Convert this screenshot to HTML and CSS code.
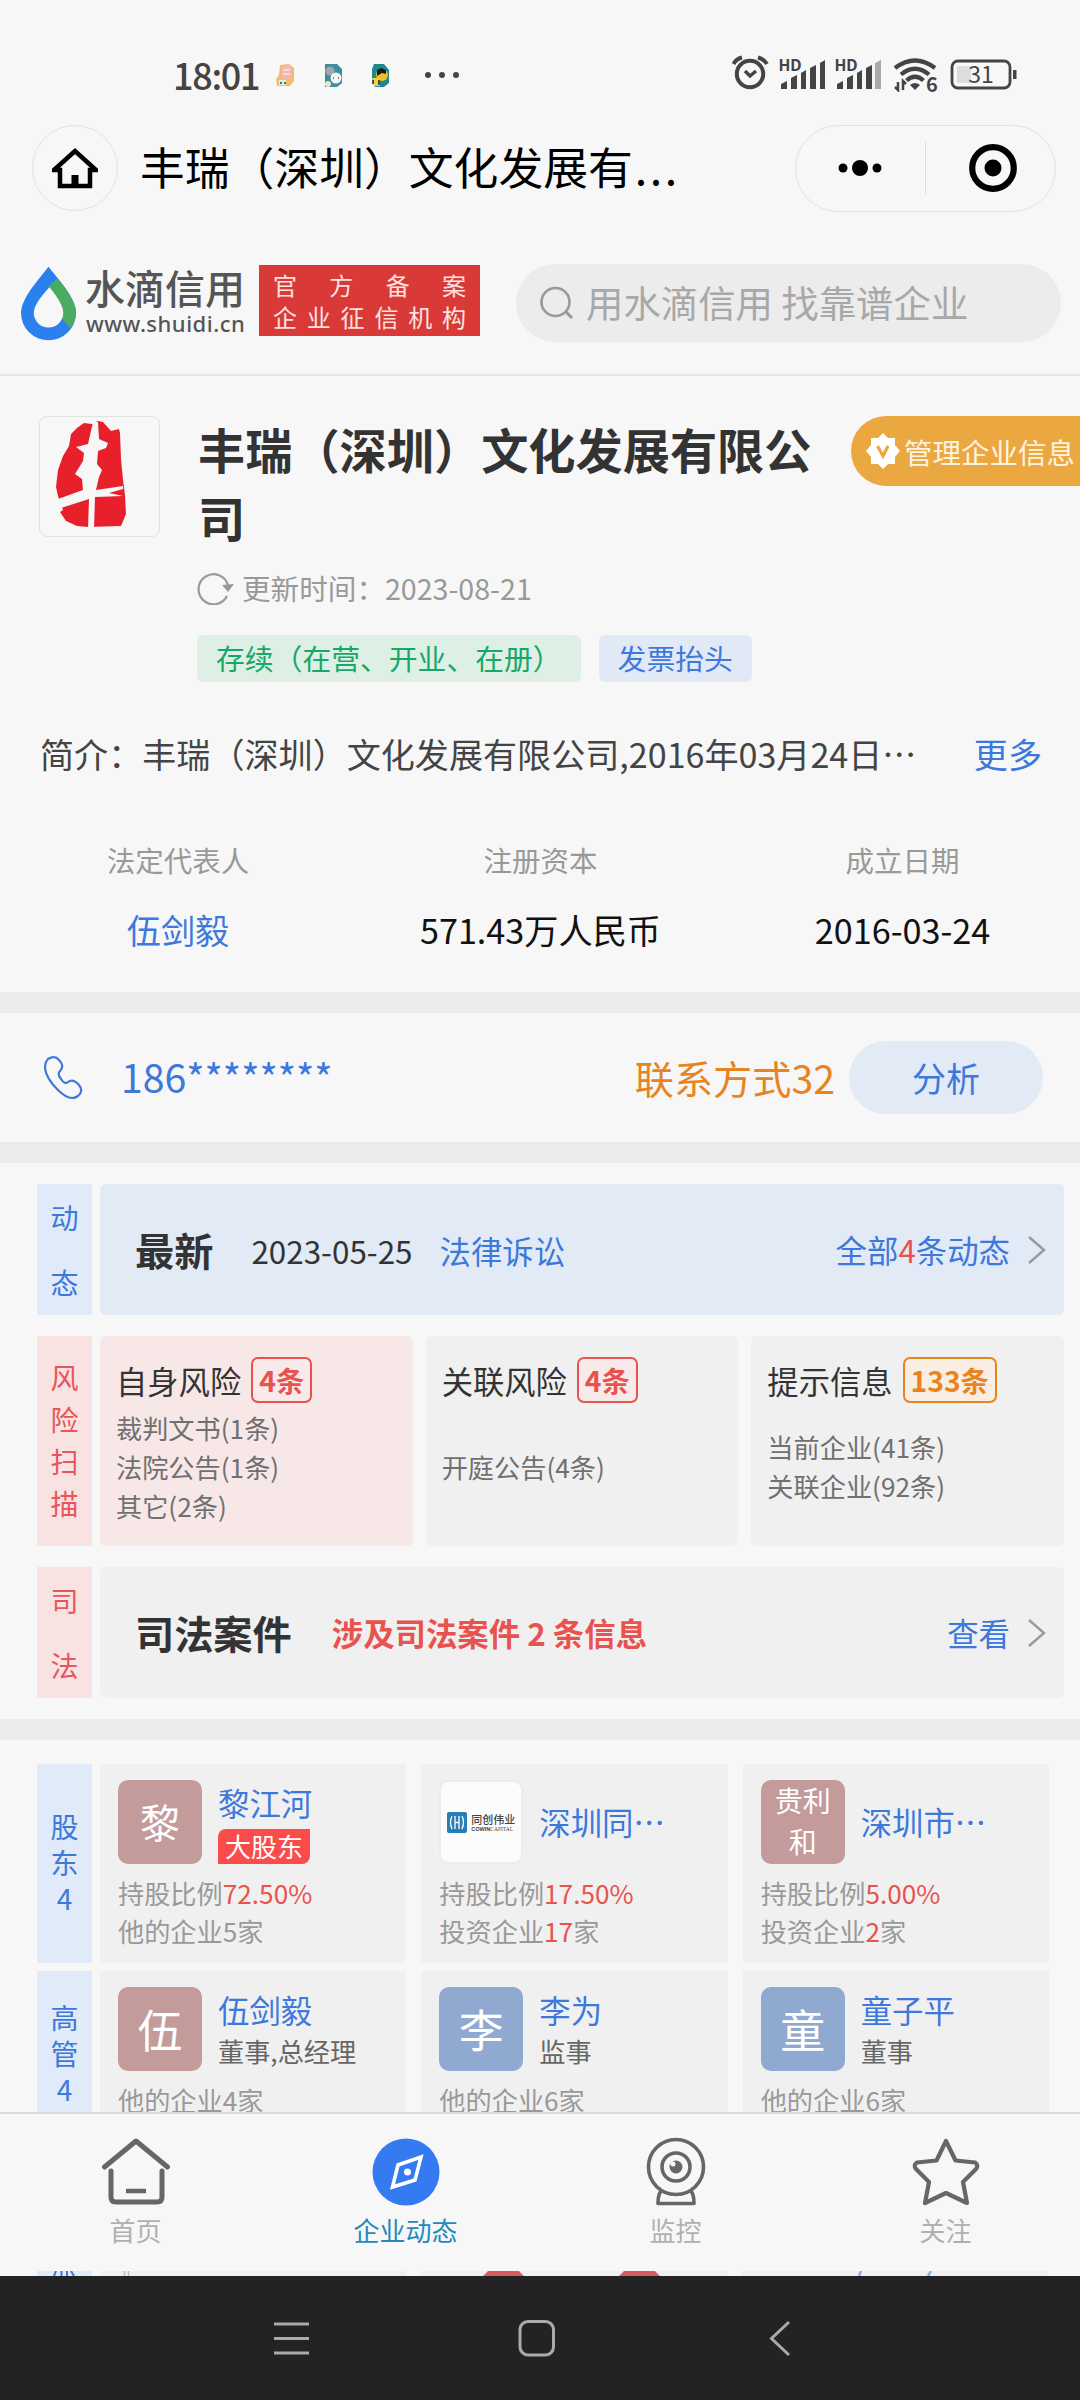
FILE: index.html
```html
<!DOCTYPE html>
<html lang="zh-CN">
<head>
    <meta charset="UTF-8">
    <meta name="viewport" content="width=device-width, initial-scale=1.0">
    <title>丰瑞（深圳）文化发展有限公司</title>
    <link rel="stylesheet" href="styles.css">
</head>
<body>

    <!-- Phone status bar -->
    <div class="status-bar">
        <span class="time">18:01</span>
        <svg class="notices" width="190" height="30" viewBox="0 0 190 30">
            <path d="M5 4 L14 3 L19 7 V20 L15 25 H2 L1 18 L4 14 Z" fill="#f0bd6b"/>
            <path d="M7 6 l9 -2 v13 l-9 1z" fill="#f4b5b5"/>
            <path d="M8 9 h7 M8 13 h7" stroke="#fbe3e3" stroke-width="1.500"/>
            <rect x="4" y="19" width="7" height="5" fill="#e9efe0"/>
            <path d="M5 22 h2 M9 22 h2" stroke="#3a7280" stroke-width="2"/>
            <path d="M50 3 H62 L67 8 V22 L62 26 H50 Z" fill="#3b8e9c"/>
            <circle cx="55" cy="10" r="4.500" fill="#a5a3ad"/>
            <circle cx="61" cy="17" r="5.500" fill="#f3f8f8"/>
            <path d="M58 17 h1 M63 17 h1" stroke="#e05050" stroke-width="2"/>
            <circle cx="53" cy="23" r="3" fill="#f2e3c5"/>
            <path d="M99 3 H109 L114 9 V22 L109 26 H100 L97 18 V8 Z" fill="#1f8790"/>
            <circle cx="107" cy="14" r="6" fill="#edc22c"/>
            <path d="M102 9 l4 -2 l5 2 v4 l-4 -1 l-5 3z" fill="#1c1c18"/>
            <path d="M97 17 h8 v8 h-6z" fill="#f3d24b"/>
            <path d="M98 19 v4 M104 19 v5" stroke="#222" stroke-width="1.500"/>
            <g fill="#444"><circle cx="153" cy="14" r="3"/><circle cx="167" cy="14" r="3"/><circle cx="181" cy="14" r="3"/></g>
        </svg>
        <svg class="signals" width="290" height="40" viewBox="0 0 290 40">
            <!-- alarm -->
            <g fill="none" stroke="#444" stroke-width="4">
                <circle cx="20" cy="22" r="13.200"/>
                <path d="M15 19 l5 5 l6 -5" stroke-width="3.500"/>
                <path d="M3.500 12 Q6 7 12 5.500 M28 5.500 Q34 7 37 12"/>
            </g>
            <text x="48.500" y="18.500" class="hd">HD</text>
            <g fill="#444">
                <path d="M51 32 l6 -3 v8 h-6z M61 26 l6 -3 v14 h-6z M71 21 l5 -3 v19 h-5z M80 16 l6 -3 v24 h-6z M90 11 l5 -3 v29 h-5z"/>
            </g>
            <text x="104.500" y="18.500" class="hd">HD</text>
            <g fill="#444">
                <path d="M107 32 l6 -3 v8 h-6z M117 26 l6 -3 v14 h-6z M127 21 l5 -3 v19 h-5z M136 16 l6 -3 v24 h-6z"/>
                <path d="M145 11 l6 -3 v29 h-6z" fill="#aaa"/>
            </g>
            <!-- wifi -->
            <g fill="none" stroke="#444" stroke-width="4.200">
                <path d="M165 16 Q185 1 205 16"/>
                <path d="M171 22.500 Q185 11 199 22.500"/>
                <path d="M176.500 28.500 Q185 21 193.500 28.500"/>
            </g>
            <path d="M180 33 q5 -4 10 0 l-5 5z" fill="#444"/>
            <path d="M168 30 v8 l-3 -3 M173 38 v-9 l3 3" fill="none" stroke="#444" stroke-width="2.500"/>
            <text x="196" y="39.500" class="six">6</text>
            <!-- battery -->
            <rect x="222" y="9" width="58" height="27" rx="6" fill="none" stroke="#444" stroke-width="2.800"/>
            <rect x="227" y="14" width="14" height="17" fill="#ddd"/>
            <rect x="283" y="18" width="3.500" height="9" fill="#444"/>
            <text x="251" y="31" text-anchor="middle" class="level">31</text>
        </svg>
    </div>

    <!-- Mini program title bar -->
    <div class="nav-bar">
        <div class="home-button">
            <svg width="46" height="42" viewBox="0 0 46 42">
                <path d="M2 23 L23 4 L44 23 H38 V39 H8 V23 Z" fill="none" stroke="#000" stroke-width="4.500"/>
                <rect x="19.500" y="28" width="7" height="12"/>
            </svg>
        </div>
        <div class="nav-title">丰瑞（深圳）文化发展有<span>...</span></div>
        <div class="capsule">
            <svg width="44" height="20" viewBox="0 0 44 20">
                <circle cx="5" cy="10" r="4.500"/><circle cx="22" cy="10" r="8"/><circle cx="39" cy="10" r="4.500"/>
            </svg>
            <i></i>
            <svg width="50" height="50" viewBox="0 0 50 50">
                <circle cx="25" cy="25" r="20.800" fill="none" stroke="#000" stroke-width="6.200"/><circle cx="25" cy="25" r="8.500"/>
            </svg>
        </div>
    </div>

    <!-- Site header -->
    <header class="site-header">
        <svg class="drop" width="58" height="78" viewBox="0 0 58 78">
            <path d="M28 1 L40 16 Q56 36 56 48 A28 28 0 0 1 0 48 Q0 36 16 16 Z" fill="#2b80ee"/>
            <path d="M37 13 L40 16 Q56 36 56 48 Q56 56 50 64 L34 44 L28 21 Z" fill="#4cab63"/>
            <path d="M29 22 Q43 39 43 48 A15 15 0 0 1 13 48 Q13 39 29 22 Z" fill="#f7f7f7"/>
        </svg>
        <div class="brand">
            <b>水滴信用</b>
            <span>www.shuidi.cn</span>
        </div>
        <div class="license">
            <p><i>官</i><i>方</i><i>备</i><i>案</i></p>
            <p><i>企</i><i>业</i><i>征</i><i>信</i><i>机</i><i>构</i></p>
        </div>
        <div class="search">
            <svg width="34" height="36" viewBox="0 0 34 36">
                <circle cx="15.500" cy="17" r="14" fill="none" stroke="#999" stroke-width="2.600"/>
                <path d="M25 26 L32 33" stroke="#999" stroke-width="3"/>
            </svg>
            <span>用水滴信用 找靠谱企业</span>
        </div>
    </header>

    <main>
        <!-- Company summary -->
        <section class="company">
            <div class="company-head">
                <div class="company-logo">
                    <svg width="118" height="118" viewBox="0 0 118 118">
                        <path d="M52 7 L44 6 L37 11 L31 17 L29 29 L23 39 L18 53 L16 70 L18 79 L23 93 L20 95 L26 104 L37 109 L48 110 L81 109 L86 97 L85 78 L83 63 L81 42 L80 16 L79 12 L71 14 L63 5 L58 4 Z" fill="#e8202c"/>
                        <path d="M53 5 L58 5 L59 22 L68 26 L66 31 L58 34 L57 47 L62 53 L59 60 L56 73 L83 69 V72 L69 76 L83 79 L55 80 L54 112 H48 L49 82 L21 91 L18 82 L43 73 L42 62 L35 57 L43 44 L44 36 L36 30 L48 27 Z" fill="#f7f7f7"/>
                    </svg>
                </div>
                <div class="company-info">
                    <h1>丰瑞（深圳）文化发展有限公司</h1>
                    <div class="updated">
                        <svg width="40" height="34" viewBox="0 0 40 34">
                            <path d="M30 25 A15 15 0 1 1 31 14" fill="none" stroke="#999" stroke-width="2.200"/>
                            <path d="M25 14 L37 13 L31 21 Z" fill="#999"/>
                        </svg>
                        <span>更新时间：2023-08-21</span>
                    </div>
                    <div class="tags">
                        <span class="tag green">存续（在营、开业、在册）</span>
                        <span class="tag blue">发票抬头</span>
                    </div>
                </div>
                <div class="manage">
                    <svg width="34" height="36" viewBox="0 0 34 36">
                        <path d="M17 0 L22 5 L29 5 L29 12 L34 18 L29 24 L29 31 L22 31 L17 36 L12 31 L5 31 L5 24 L0 18 L5 12 L5 5 L12 5 Z" fill="#fff"/>
                        <path d="M11.500 13 L17 23 L22 13" fill="none" stroke="#eca840" stroke-width="3.200"/>
                    </svg>
                    <span>管理企业信息</span>
                </div>
            </div>
            <div class="intro">
                <span>简介：丰瑞（深圳）文化发展有限公司,2016年03月24日⋯</span>
                <a>更多</a>
            </div>
            <div class="facts">
                <div><label>法定代表人</label><b class="link">伍剑毅</b></div>
                <div><label>注册资本</label><b>571.43万人民币</b></div>
                <div><label>成立日期</label><b>2016-03-24</b></div>
            </div>
        </section>

        <!-- Contact -->
        <section class="contact">
            <svg width="40" height="44" viewBox="0 0 40 44">
                <path d="M4 3 Q11 -1 15 4 Q21 10 16 15 Q13 18 17 23 Q21 29 24 26 Q29 22 35 29 Q40 35 34 40 Q26 46 14 34 Q2 22 1 12 Q1 6 4 3 Z" fill="none" stroke="#3d78dc" stroke-width="2.200"/>
            </svg>
            <span class="phone">186********</span>
            <span class="ways">联系方式32</span>
            <span class="analyse">分析</span>
        </section>

        <!-- News, risk and court rows -->
        <section class="overview">
            <div class="row news">
                <div class="side blue"><i>动</i><i>态</i></div>
                <div class="bar">
                    <h2>最新</h2>
                    <span class="date">2023-05-25</span>
                    <a>法律诉讼</a>
                    <a class="all">全部<em>4</em>条动态</a>
                    <svg width="20" height="30" viewBox="0 0 20 30"><path d="M2 2 L17 15 L2 28" fill="none" stroke="#999" stroke-width="2.400"/></svg>
                </div>
            </div>
            <div class="row risk">
                <div class="side red"><i>风</i><i>险</i><i>扫</i><i>描</i></div>
                <div class="risk-cards">
                    <div class="risk-card own">
                        <h3>自身风险<span class="count">4条</span></h3>
                        <div class="lines"><p>裁判文书(1条)</p><p>法院公告(1条)</p><p>其它(2条)</p></div>
                    </div>
                    <div class="risk-card">
                        <h3>关联风险<span class="count">4条</span></h3>
                        <div class="lines"><p>开庭公告(4条)</p></div>
                    </div>
                    <div class="risk-card">
                        <h3>提示信息<span class="count orange">133条</span></h3>
                        <div class="lines"><p>当前企业(41条)</p><p>关联企业(92条)</p></div>
                    </div>
                </div>
            </div>
            <div class="row court">
                <div class="side red"><i>司</i><i>法</i></div>
                <div class="bar">
                    <h2>司法案件</h2>
                    <strong>涉及司法案件 2 条信息</strong>
                    <a class="all">查看</a>
                    <svg width="20" height="30" viewBox="0 0 20 30"><path d="M2 2 L17 15 L2 28" fill="none" stroke="#999" stroke-width="2.400"/></svg>
                </div>
            </div>
        </section>

        <!-- Shareholders and executives -->
        <section class="people">
            <div class="row holders">
                <div class="side blue"><i>股</i><i>东</i><i>4</i></div>
                <div class="person-cards">
                    <div class="person">
                        <div class="who">
                            <div class="avatar rose small">黎</div>
                            <div><a>黎江河</a><span class="major">大股东</span></div>
                        </div>
                        <p>持股比例<em>72.50%</em></p>
                        <p>他的企业5家</p>
                    </div>
                    <div class="person">
                        <div class="who">
                            <div class="avatar logo">
                                <svg width="20" height="21" viewBox="0 0 20 21">
                                    <rect width="20" height="21" rx="2" fill="#267fb5"/>
                                    <path d="M5 4 Q2 10 5 17 M8 4 V17 M12 4 V17 M15 4 Q18 10 15 17 M8 10.500 H12" fill="none" stroke="#fff" stroke-width="1.300"/>
                                </svg>
                                <div><b>同创伟业</b><small>COWIN<span>CAPITAL</span></small></div>
                            </div>
                            <div class="single"><a>深圳同⋯</a></div>
                        </div>
                        <p>持股比例<em>17.50%</em></p>
                        <p>投资企业<em>17</em>家</p>
                    </div>
                    <div class="person">
                        <div class="who">
                            <div class="avatar rose long">贵利和</div>
                            <div class="single"><a>深圳市⋯</a></div>
                        </div>
                        <p>持股比例<em>5.00%</em></p>
                        <p>投资企业<em>2</em>家</p>
                    </div>
                </div>
            </div>
            <div class="row managers">
                <div class="side blue"><i>高</i><i>管</i><i>4</i></div>
                <div class="person-cards">
                    <div class="person">
                        <div class="who">
                            <div class="avatar rose">伍</div>
                            <div><a>伍剑毅</a><span class="post">董事,总经理</span></div>
                        </div>
                        <p>他的企业4家</p>
                    </div>
                    <div class="person">
                        <div class="who">
                            <div class="avatar steel">李</div>
                            <div><a>李为</a><span class="post">监事</span></div>
                        </div>
                        <p>他的企业6家</p>
                    </div>
                    <div class="person">
                        <div class="who">
                            <div class="avatar steel">童</div>
                            <div><a>童子平</a><span class="post">董事</span></div>
                        </div>
                        <p>他的企业6家</p>
                    </div>
                </div>
            </div>
        </section>
    </main>

    <!-- Bottom tabs -->
    <nav class="tabs">
        <div>
            <svg width="70" height="70" viewBox="0 0 70 70" fill="none" stroke="#666" stroke-linejoin="round" stroke-linecap="round">
                <path d="M3.500 30 L35 4 L66.500 30" stroke-width="5"/>
                <path d="M10 34 V60 Q10 65 15 65 H56 Q61 65 61 60 V34" stroke-width="5"/>
                <path d="M25 54 H45" stroke-width="4.500" stroke-linecap="butt"/>
            </svg>
            <span>首页</span>
        </div>
        <div class="active">
            <svg width="70" height="70" viewBox="0 0 70 70">
                <circle cx="35" cy="35" r="33.500" fill="#347af0"/>
                <path d="M50 20 L44 43 L21.500 50 L27 28 Z" fill="none" stroke="#fff" stroke-width="3.600"/>
                <circle cx="36.500" cy="35" r="3.500" fill="#fff"/>
            </svg>
            <span>企业动态</span>
        </div>
        <div>
            <svg width="70" height="70" viewBox="0 0 70 70" fill="none" stroke="#666" stroke-width="3.600">
                <circle cx="35" cy="30" r="27.500"/>
                <circle cx="35" cy="30" r="14"/>
                <circle cx="35" cy="30" r="6.500" fill="#666" stroke="none"/>
                <circle cx="32" cy="27" r="2.500" fill="#f7f7f7" stroke="none"/>
                <path d="M20 54 Q17 58 17 66.500 H53 Q53 58 50 54" stroke-linejoin="round"/>
            </svg>
            <span>监控</span>
        </div>
        <div>
            <svg width="70" height="70" viewBox="0 0 70 70">
                <path d="M35 4 L44.500 23.500 L64 25.500 Q68 28 65 32 L52 45 L56 66 L35 56 L14 66 L18 45 L5 32 Q2 28 6 25.500 L25.500 23.500 Z" fill="none" stroke="#666" stroke-width="4.200" stroke-linejoin="round"/>
            </svg>
            <span>关注</span>
        </div>
    </nav>

    <!-- Top edge of the next row, visible under the tabs -->
    <div class="next-row">
        <div class="side blue">
            <svg width="55" height="5" viewBox="0 0 55 5"><path d="M19 0 L17 5 M24.500 0 V5 M30 0 V5 M34 0 L37 5" stroke="#3d78dc" stroke-width="2"/></svg>
        </div>
        <div class="peek"><svg width="306" height="5" viewBox="0 0 306 5"><path d="M24.500 0 V5 M28.500 0 V5" stroke="#bbb" stroke-width="1.500"/></svg></div>
        <div class="peek"><svg width="306" height="5" viewBox="0 0 306 5"><path d="M67 0 H98 L103 5 H62 Z M203 0 H234 L239 5 H198 Z" fill="#d95b62"/></svg></div>
        <div class="peek"><svg width="306" height="5" viewBox="0 0 306 5"><path d="M119 0 L117 5 M189 0 L186 5" stroke="#8fb0d8" stroke-width="2.500"/></svg></div>
    </div>

    <!-- Android buttons -->
    <div class="system-nav">
        <svg width="1080" height="124" viewBox="0 0 1080 124" fill="none" stroke="#aaa" stroke-width="3">
            <path d="M274 48 H309 M274 62.500 H309 M274 77 H309"/>
            <rect x="520" y="45.500" width="33.500" height="33.500" rx="8"/>
            <path d="M789 46 L771.500 62.500 L789 79"/>
        </svg>
    </div>

</body>
</html>
```
FILE: styles.css
```css
* {
    box-sizing: border-box;
}

body {
    margin: 0;
    width: 1080px;
    height: 2400px;
    overflow: hidden;
    display: flex;
    flex-direction: column;
    font-family: "Noto Sans CJK SC", "Noto Sans", sans-serif;
    background: #f7f7f7;
    color: #333;
}

h1, h2, h3, p {
    margin: 0;
}

i, em {
    font-style: normal;
}

a {
    color: #3d78dc;
}

em {
    color: #e9534f;
}

svg {
    display: block;
    flex: none;
}

/* Status bar */
.status-bar {
    height: 124px;
    display: flex;
    align-items: flex-start;
    padding: 52px 60px 0 173px;
}

.time {
    width: 102px;
    font-size: 36px;
    font-weight: 500;
    line-height: 44px;
    letter-spacing: -1.3px;
    color: #444;
}

.notices {
    margin-top: 9px;
}

.signals {
    margin-left: auto;
    color: #444;
}

.status-bar text {
    fill: #444;
    font-family: "Noto Sans", sans-serif;
}

.hd {
    font-size: 15.5px;
    font-weight: 700;
}

.status-bar .six {
    font-family: "Noto Sans CJK SC", sans-serif;
    font-size: 20px;
    font-weight: 700;
}

.status-bar .level {
    font-family: "Noto Sans CJK SC", sans-serif;
    font-size: 23px;
}

/* Title bar */
.nav-bar {
    height: 88px;
    display: flex;
    align-items: center;
    padding: 0 24px 0 32px;
    color: #000;
}

.home-button {
    width: 86px;
    height: 86px;
    border: 1px solid #e2e2e2;
    border-radius: 50%;
    display: flex;
    align-items: center;
    justify-content: center;
}

.nav-title {
    flex: 1;
    margin: 0 0 4px 22px;
    font-size: 44.8px;
    line-height: 60px;
    font-weight: 400;
    white-space: nowrap;
}

.nav-title span {
    letter-spacing: 2.5px;
    margin-left: 2px;
}

.capsule {
    width: 261px;
    height: 87px;
    border: 1px solid #e2e2e2;
    border-radius: 44px;
    display: flex;
    align-items: center;
    padding: 0 37px 0 42px;
}

.capsule i {
    width: 1px;
    height: 52px;
    margin: 0 auto 0 43px;
    background: #dcdcdc;
}

/* Site header with logo and search */
.site-header {
    height: 164px;
    display: flex;
    align-items: center;
    padding: 17px 19px 0 21px;
    border-bottom: 2px solid #e6e6e6;
}

.drop {
    margin-top: 4px;
    width: 57px;
}

.brand {
    width: 173px;
    margin: 0 0 3px 7px;
    color: #555;
}

.brand b {
    display: block;
    font-size: 40px;
    font-weight: 500;
    line-height: 46px;
}

.brand span {
    display: block;
    font-family: "Noto Sans", sans-serif;
    font-weight: 500;
    font-size: 22px;
    line-height: 26px;
    letter-spacing: 0.5px;
    padding-left: 1px;
}

.license {
    width: 221px;
    height: 71px;
    margin: 0 36px 3px 1px;
    padding: 4px 14px;
    background: #d93a38;
    color: #fbe3e0;
    font-size: 24px;
    line-height: 32px;
}

.license p {
    display: flex;
    justify-content: space-between;
}

.search {
    flex: 1;
    height: 78px;
    margin-top: 3px;
    padding-left: 24px;
    border-radius: 39px;
    background: #ececec;
    display: flex;
    align-items: center;
    gap: 12px;
    font-size: 37.4px;
    line-height: 50px;
    color: #a8a8a8;
    white-space: nowrap;
}

.search span {
    margin-bottom: 3px;
}

/* Scrolled page content */
main {
    height: 1736px;
    overflow: hidden;
}

.company {
    height: 637px;
    padding-top: 40px;
    border-bottom: 21px solid #ebebeb;
}

.company-head {
    display: flex;
    align-items: flex-start;
    padding-left: 39px;
}

.company-logo {
    width: 121px;
    height: 121px;
    border: 1px solid #e2e2e2;
    border-radius: 8px;
    overflow: hidden;
}

.company-info {
    width: 654px;
    margin-left: 37px;
}

h1 {
    width: 620px;
    margin: -1px 0 0 1px;
    font-size: 47.2px;
    font-weight: 700;
    line-height: 68px;
}

.updated {
    height: 34px;
    margin-top: 20px;
    display: flex;
    align-items: center;
    gap: 5px;
    font-size: 28.6px;
    line-height: 34px;
    color: #999;
}

.tags {
    display: flex;
    gap: 18px;
    margin-top: 30px;
}

.tag {
    height: 47px;
    padding: 0 19px;
    border-radius: 6px;
    font-size: 28.8px;
    line-height: 46px;
    white-space: nowrap;
}

.tag.green {
    background: #deefe6;
    color: #17a867;
}

.tag.blue {
    background: #e1e9f6;
    color: #3d78dc;
}

.manage {
    flex: 1;
    height: 70px;
    border-radius: 35px 0 0 35px;
    background: #eca840;
    color: #fdf3e0;
    display: flex;
    align-items: center;
    gap: 4px;
    padding-left: 15px;
    font-size: 28.5px;
    white-space: nowrap;
}

.intro {
    display: flex;
    justify-content: space-between;
    margin-top: 46px;
    padding: 0 38px 0 40px;
    font-size: 34.1px;
    line-height: 50px;
    color: #444;
    white-space: nowrap;
}

.facts {
    display: grid;
    grid-template-columns: 356px 369px 355px;
    margin-top: 60px;
    text-align: center;
}

.facts label {
    display: block;
    font-size: 28.5px;
    line-height: 44px;
    color: #999;
}

.facts b {
    display: block;
    margin-top: 22px;
    font-size: 34.2px;
    font-weight: 400;
    line-height: 50px;
    color: #111;
}

.facts b.link {
    color: #3d78dc;
}

/* Contact row */
.contact {
    height: 150px;
    border-bottom: 21px solid #ebebeb;
    display: flex;
    align-items: center;
    padding: 0 37px 0 44px;
}

.phone {
    margin: 0 0 3px 37px;
    font-size: 39.2px;
    color: #3d78dc;
}

.ways {
    margin: 0 0 2px auto;
    font-size: 39.2px;
    color: #e88420;
}

.analyse {
    width: 194px;
    height: 73px;
    margin-left: 14px;
    border-radius: 37px;
    background: #e2eaf6;
    color: #3d78dc;
    font-size: 34px;
    line-height: 73px;
    text-align: center;
}

/* Rows with a vertical side label */
.row {
    display: flex;
    gap: 8px;
}

.side {
    flex: none;
    width: 55px;
    padding-bottom: 2px;
    display: flex;
    flex-direction: column;
    align-items: center;
    justify-content: center;
    font-size: 28px;
    line-height: 42px;
}

.side.blue {
    background: #e0eaf8;
    color: #3d78dc;
}

.side.red {
    background: #f8e2e2;
    color: #e8555a;
}

.overview {
    height: 577px;
    padding: 21px 16px 0 37px;
    border-bottom: 21px solid #ebebeb;
    display: flex;
    flex-direction: column;
    gap: 21px;
}

.news, .court {
    height: 131px;
}

.news .side, .court .side {
    justify-content: space-around;
    padding-bottom: 1px;
}

.risk {
    height: 210px;
}

.bar {
    flex: 1;
    display: flex;
    align-items: center;
    padding: 0 17px 0 35px;
    border-radius: 6px;
    background: #f0f0f0;
    font-size: 31.4px;
    white-space: nowrap;
}

.news .bar {
    background: #e2eaf6;
}

h2 {
    margin-bottom: 2px;
    font-size: 39.2px;
    font-weight: 700;
}

.date {
    margin: 1px 27px 0 38px;
}

.date + a {
    margin-top: 1px;
}

.bar strong {
    margin: 0 0 1px 40px;
    color: #e9534f;
}

.bar .all {
    margin: 0 17px 1px auto;
}

.risk-cards {
    flex: 1;
    display: grid;
    grid-template-columns: repeat(3, 1fr);
    gap: 13px;
}

.risk-card {
    padding: 21px 0 0 16px;
    border-radius: 6px;
    background: #f0f0f0;
}

.risk-card.own {
    background: #f8e7e7;
}

h3 {
    display: flex;
    align-items: center;
    gap: 10px;
    font-size: 31.3px;
    font-weight: 400;
    line-height: 45px;
}

.count {
    height: 46px;
    padding: 0 6px;
    border: 2px solid #e9534f;
    border-radius: 7px;
    background: #f8eaea;
    color: #e9534f;
    font-size: 28.3px;
    font-weight: 700;
    line-height: 41px;
}

.count.orange {
    border-color: #e88420;
    background: #f9eee3;
    color: #e88420;
}

.lines {
    height: 120px;
    margin-top: 4px;
    display: flex;
    flex-direction: column;
    justify-content: center;
    font-size: 26.2px;
    line-height: 39px;
    color: #707070;
}

/* Shareholder and executive cards */
.people {
    padding: 24px 31px 0 37px;
    display: flex;
    flex-direction: column;
    gap: 8px;
}

.people .side {
    padding-bottom: 3px;
    line-height: 36px;
}

.holders {
    height: 199px;
}

.managers {
    height: 167px;
}

.person-cards {
    flex: 1;
    display: grid;
    grid-template-columns: repeat(3, 1fr);
    gap: 15px;
}

.person {
    padding: 16px 0 0 18px;
    background: #f0f0f0;
    font-size: 26.2px;
    line-height: 38px;
    color: #999;
    white-space: nowrap;
}

.who {
    display: flex;
    gap: 16px;
    height: 84px;
    margin-bottom: 10px;
}

.who a {
    display: block;
    font-size: 31.4px;
    line-height: 46px;
}

.single {
    align-self: center;
}

.avatar {
    width: 84px;
    height: 84px;
    border-radius: 10px;
    color: #fff;
    font-size: 45px;
    line-height: 84px;
    text-align: center;
}

.avatar.rose {
    background: #c39b9b;
}

.avatar.steel {
    background: #8fa9d1;
}

.avatar.small {
    font-size: 40px;
    line-height: 82px;
}

.avatar.long {
    padding: 0 12px;
    font-size: 28px;
    line-height: 41px;
    white-space: normal;
}

.avatar.logo {
    display: flex;
    align-items: center;
    gap: 4px;
    padding-left: 6px;
    border: 2px solid #ececec;
    background: #fcfcfc;
    color: #444;
    text-align: left;
}

.logo b {
    display: block;
    font-size: 11px;
    font-weight: 500;
    line-height: 13px;
}

.logo small {
    display: block;
    font-family: "Liberation Sans", sans-serif;
    font-size: 5.5px;
    font-weight: 700;
    line-height: 6px;
}

.logo small span {
    font-family: "Liberation Serif", serif;
    font-weight: 400;
}

.major {
    display: block;
    width: 92px;
    height: 35px;
    margin-top: 3px;
    border-radius: 8px 0 8px 0;
    background: #fb4b4b;
    color: #fff;
    font-size: 26px;
    line-height: 33px;
    text-align: center;
}

.post {
    display: block;
    margin-top: 1px;
    font-size: 26.2px;
    line-height: 34px;
    color: #666;
}

/* Bottom tabs */
.tabs {
    height: 159px;
    border-top: 2px solid #dcdcdc;
    background: #f7f7f7;
    display: grid;
    grid-template-columns: repeat(4, 1fr);
}

.tabs div {
    display: flex;
    flex-direction: column;
    align-items: center;
    padding: 23px 0 0 1px;
    font-size: 26px;
    line-height: 36px;
    color: #b0b0b0;
}

.tabs span {
    margin-top: 5px;
}

.tabs .active {
    color: #2389bd;
}

.next-row {
    height: 5px;
    display: flex;
    padding-left: 37px;
}

.next-row .side {
    margin-right: 8px;
    padding: 0;
}

.peek {
    width: 306px;
    margin-right: 15px;
    background: #f0f0f0;
}

.system-nav {
    height: 124px;
    background: #232323;
}
```
